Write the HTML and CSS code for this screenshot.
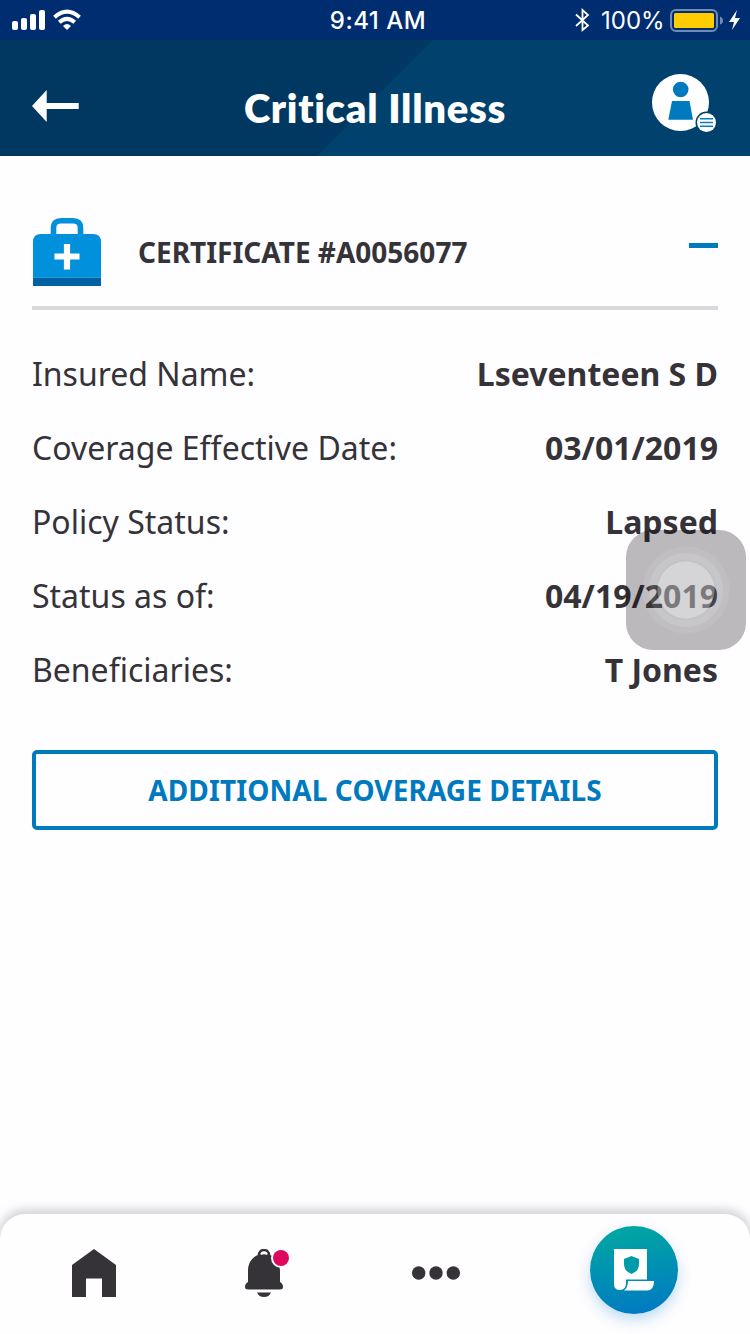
FILE: index.html
```html
<!DOCTYPE html>
<html lang="en">
<head>
<meta charset="utf-8">
<title>Critical Illness</title>
<link rel="stylesheet" href="styles.css">
</head>
<body>
<div class="app">
  <div class="status">
    <svg class="signal" width="72" height="22" viewBox="0 0 72 22" fill="#fff">
      <rect x="0" y="12" width="6" height="9" rx="2"/><rect x="9" y="9" width="6" height="12" rx="2"/><rect x="18" y="5" width="6" height="16" rx="2"/><rect x="27" y="1" width="6" height="20" rx="2"/>
      <g fill="none" stroke="#fff" stroke-width="4"><path d="M42.500 8.300Q55-3.100 67.500 8.300"/><path d="M47.300 13.300Q55 6.300 62.700 13.300"/></g>
      <path d="M51 17Q55 13 59 17L55 21Z"/>
    </svg>
    <span class="time">9:41 AM</span>
    <div class="power">
      <svg width="16" height="24" viewBox="0 0 16 24" fill="none" stroke="#fff" stroke-width="1.800"><path d="M2 6.500L14 17.500L8.500 22V2L14 7L2 18"/></svg>
      <span class="percent">100%</span>
      <svg width="72" height="24" viewBox="0 0 72 24"><rect x="1" y="2" width="46" height="21" rx="5" fill="none" stroke="#728bb5" stroke-width="2"/><rect x="4" y="5" width="40" height="15" rx="1.500" fill="#fc0"/><path d="M50 8.500Q53 9.500 53 12.500T50 16.500Z" fill="#728bb5"/><path d="M67 2L59 14H64L62 22L70 10H65Z" fill="#fff"/></svg>
    </div>
  </div>
  <header class="header">
    <svg class="back" width="48" height="34" viewBox="0 0 48 34" fill="#fff"><path d="M0 17L14.700 1V14H46.700V20H14.700V33Z"/></svg>
    <h1 class="title">Critical Illness</h1>
    <svg class="profile" width="66" height="60" viewBox="0 0 66 60"><circle cx="28.500" cy="28.500" r="28.500" fill="#fff"/><circle cx="28.700" cy="15.500" r="7.800" fill="#007abf"/><path d="M20 27H37.500L41 45.700H16.300Z" fill="#007abf"/><circle cx="54.500" cy="48.500" r="11" fill="#00416e"/><circle cx="54.500" cy="48.500" r="9.500" fill="#fff"/><path d="M48 44.700H61M48 48.500H61M48 52.300H61" stroke="#0b7fb9" stroke-width="1.500"/></svg>
  </header>
  <main class="content">
    <section class="certificate">
      <svg width="70" height="68" viewBox="0 0 70 68"><path d="M22.500 18V10Q22.500 2.800 30 2.800H42Q49.500 2.800 49.500 10V18" transform="translate(-1)" fill="none" stroke="#0090dc" stroke-width="5.600"/><path d="M1 60V24Q1 16 9 16H61Q69 16 69 24V60Z" fill="#0090dc"/><path d="M1 60H69V68H1Z" fill="#0060a2"/><path d="M1 59.600H69" stroke="#2a9edc" stroke-width=".8"/><path d="M22.500 38.500H47.500M35 26V51.500" stroke="#fff" stroke-width="6.200"/></svg>
      <h2 class="certificate-title">CERTIFICATE #A0056077</h2>
      <span class="collapse"></span>
    </section>
    <dl class="details">
      <div class="row"><dt>Insured Name:</dt><dd>Lseventeen S D</dd></div>
      <div class="row"><dt>Coverage Effective Date:</dt><dd>03/01/2019</dd></div>
      <div class="row"><dt>Policy Status:</dt><dd>Lapsed</dd></div>
      <div class="row"><dt>Status as of:</dt><dd>04/19/2019</dd></div>
      <div class="row"><dt>Beneficiaries:</dt><dd>T Jones</dd></div>
    </dl>
    <button class="more-details">ADDITIONAL COVERAGE DETAILS</button>
  </main>
  <nav class="nav">
    <svg class="home" width="44" height="48" viewBox="0 0 44 48" fill="#353338"><path d="M22 0L44 16V48H30V29.500H14V48H0V16Z"/></svg>
    <svg class="bell" width="46" height="50" viewBox="0 0 46 50"><circle cx="19" cy="6" r="5" fill="none" stroke="#353338" stroke-width="2.500"/><path d="M3 22C3 11 10 5 19 5S35 11 35 22V33C36.500 34 38 35 38 38Q38 40.500 35 40.500H3Q0 40.500 0 38C0 35 1.500 34 3 33Z" fill="#353338"/><path d="M15.500 6Q19 .500 22.500 6Q19 4.500 15.500 6Z" fill="#fff"/><path d="M12 43.500H26Q24 48 19 48T12 43.500Z" fill="#353338"/><circle cx="36" cy="9" r="10" fill="#fefdff"/><circle cx="36" cy="9" r="8" fill="#df075d"/></svg>
    <svg class="dots" width="48" height="14" viewBox="0 0 48 14" fill="#353338"><circle cx="6.700" cy="7" r="6.700"/><circle cx="24" cy="7" r="6.700"/><circle cx="41.300" cy="7" r="6.700"/></svg>
    <div class="policy"><svg width="42" height="44" viewBox="0 0 42 44"><path d="M1 1H34V31.500H13V35Q13 42 7 42T1 36Z" fill="#fff"/><path d="M18.500 8L26 11V16Q26 23 18.500 26Q11 23 11 16V11Z" fill="#009baa"/><path d="M15 33H41Q41 42.500 34 42.500H11Q15 39.500 15 33Z" fill="#fff"/></svg></div>
  </nav>
  <div class="assist"></div>
</div>
</body>
</html>
```
FILE: styles.css
```css
* { box-sizing: border-box; }
body { margin: 0; background: #fefdff; color: #353338; font-family: "Noto Sans", sans-serif; }
svg { display: block; flex: none; }
.app { position: relative; display: flex; flex-direction: column; width: 750px; height: 1334px; overflow: hidden; }
.status { display: grid; grid-template-columns: 1fr auto 1fr; align-items: center; height: 40px; padding: 0 8px 0 12px; background: #002d6f; color: #fff; font-family: Inter, sans-serif; font-size: 24px; line-height: 40px; }
.time { padding: 2px 0 0 2px; line-height: 38px; font-weight: 500; letter-spacing: .5px; }
.power { display: flex; align-items: center; justify-content: flex-end; }
.percent { width: 62px; margin: 0 7px 0 11px; padding-top: 2px; line-height: 38px; font-size: 24px; letter-spacing: 0; white-space: nowrap; }
.header { display: grid; grid-template-columns: 66px 1fr 66px; align-items: center; height: 116px; padding: 10px 32px 0; background: linear-gradient(134.5deg, #003861 0 50%, #00416e 50%); color: #fff; }
.back { margin-top: 6px; }
.title { margin: 10px 0 0; text-align: center; font: 800 40px/46px Lato, sans-serif; letter-spacing: .7px; white-space: nowrap; }
.profile { margin-top: 1px; }
.content { flex: 1; padding: 62px 32px 0; }
.certificate { display: flex; height: 92px; border-bottom: 4px solid #dad9d9; }
.certificate-title { flex: 1; margin: 14px 0 0 36px; font-size: 28px; line-height: 40px; font-weight: 700; white-space: nowrap; }
.collapse { width: 29px; height: 5px; margin-top: 25px; background: #007abf; }
.details { display: flex; flex-direction: column; gap: 30px; margin: 42px 0 0; }
.row { display: flex; justify-content: space-between; font-size: 32px; line-height: 44px; white-space: nowrap; }
.row dd { margin: 0; font-weight: 700; }
.more-details { display: block; width: 100%; height: 80px; margin-top: 58px; padding: 0; border: 4px solid #007abf; border-radius: 5px; background: #fefdff; color: #007abf; font: 700 28px/72px "Noto Sans", sans-serif; letter-spacing: .1px; }
.nav { display: flex; height: 120px; padding: 0 72px; border-radius: 25px 25px 0 0; background: #fefdff; box-shadow: 0 -3px 10px 2px rgba(50,45,50,.2); }
.home { margin-top: 35px; }
.bell { margin: 35px 0 0 129px; }
.dots { margin: 52px 0 0 121px; }
.policy { display: flex; align-items: center; justify-content: center; flex: none; width: 88px; height: 88px; margin: 12px 0 0 130px; border-radius: 50%; background: linear-gradient(170deg, #00aaa0, #0077c5); box-shadow: 0 6px 14px rgba(0,122,200,.25); }
.assist { position: absolute; top: 530px; left: 626px; width: 120px; height: 120px; border-radius: 27px; background: radial-gradient(circle at 50% 50%, rgba(255,255,255,.39) 0 28px, rgba(255,255,255,.1) 29px, rgba(255,255,255,.17) 31px 36.500px, rgba(255,255,255,.07) 37.500px 43px, transparent 44px), rgba(6,4,8,.27); }
```
